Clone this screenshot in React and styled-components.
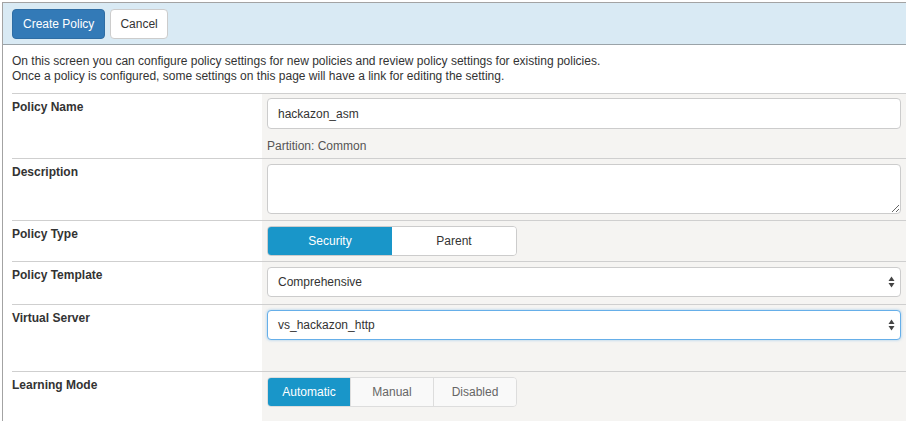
import styled, { createGlobalStyle } from "styled-components";

const GlobalStyle = createGlobalStyle`
  body {
    margin: 0;
    background: #ffffff;
    font-family: "Liberation Sans", Arial, sans-serif;
    font-size: 12px;
    color: #333;
  }
`;

// outer panel with the grey frame on the top and left
const Frame = styled.div`
  margin: 2px 0 0 2px;
  border-top: 1px solid #a3a3a3;
  border-left: 1px solid #a3a3a3;
  min-height: 418px;
  background: #fff;
`;

const Toolbar = styled.div`
  display: flex;
  gap: 5px;
  height: 42px;
  padding: 6px 0 0 9px;
  box-sizing: border-box;
  background: #d9eaf4;
  border-bottom: 1px solid #9aa3a8;
`;

const Button = styled.button`
  height: 30px;
  padding: 0 ${(p) => (p.primary ? 10 : 9)}px;
  border-radius: 4px;
  font-family: inherit;
  font-size: 12px;
  cursor: pointer;
  border: 1px solid ${(p) => (p.primary ? "#2e6da4" : "#ccc")};
  background: ${(p) => (p.primary ? "#337ab7" : "#fff")};
  color: ${(p) => (p.primary ? "#fff" : "#333")};
`;

const Intro = styled.div`
  padding: 9px 0 9px 9px;
  line-height: 15px;
`;

const Form = styled.div`
  margin-left: 9px;
`;

const Row = styled.div`
  display: grid;
  grid-template-columns: 250px 1fr;
  border-top: 1px solid #cfcfcf;
  min-height: ${(p) => p.height}px;
`;

const Label = styled.div`
  font-weight: bold;
  padding-top: 6px;
  line-height: 15px;
`;

const Value = styled.div`
  background: #f5f4f2;
  padding: ${(p) => p.pad || "4px 5px 5px 5px"};
  display: flex;
  flex-direction: column;
  align-items: flex-start;
`;

const TextInput = styled.input`
  box-sizing: border-box;
  width: 100%;
  height: 31px;
  padding: 0 10px;
  border: 1px solid #ccc;
  border-radius: 4px;
  background: #fff;
  font-family: inherit;
  font-size: 12px;
  color: #333;
  outline: none;
`;

const Note = styled.div`
  margin-top: 10px;
  color: #555;
  line-height: 14px;
`;

const TextArea = styled.textarea`
  box-sizing: border-box;
  width: 100%;
  height: 50px;
  border: 1px solid #ccc;
  border-radius: 4px;
  background: #fff;
  font-family: inherit;
  font-size: 12px;
  outline: none;
  display: block;
`;

const Segmented = styled.div`
  display: flex;
  width: 250px;
  height: 30px;
  border-radius: 4px;
  overflow: hidden;
  border: 1px solid ${(p) => (p.muted ? "#ddd" : "#ccc")};
  box-sizing: border-box;
`;

const Segment = styled.div`
  flex: 1;
  display: flex;
  align-items: center;
  justify-content: center;
  font-size: 12px;
  background: ${(p) => (p.active ? "#1996c9" : p.muted ? "#f9f9f9" : "#fff")};
  color: ${(p) => (p.active ? "#fff" : p.muted ? "#666" : "#333")};
  border-left: ${(p) => (p.first ? "none" : p.muted ? "1px solid #ddd" : "none")};
`;

const SelectBox = styled.div`
  box-sizing: border-box;
  width: 100%;
  height: 30px;
  display: flex;
  align-items: center;
  justify-content: space-between;
  padding: 0 5px 0 10px;
  background: #fff;
  border: 1px solid ${(p) => (p.focused ? "#66afe9" : "#ccc")};
  border-radius: 4px;
  box-shadow: ${(p) => (p.focused ? "0 0 3px rgba(102, 175, 233, 0.6)" : "none")};
  color: #333;
`;

function Arrows() {
  return (
    <svg width="7" height="12" viewBox="0 0 7 12">
      <path d="M3.5 0.5 L6.5 5 L0.5 5 Z" fill="#444" />
      <path d="M0.5 7 L6.5 7 L3.5 11.5 Z" fill="#444" />
    </svg>
  );
}

export default function App() {
  return (
    <>
      <GlobalStyle />
      <Frame>
        <Toolbar>
          <Button primary>Create Policy</Button>
          <Button>Cancel</Button>
        </Toolbar>
        <Intro>
          On this screen you can configure policy settings for new policies and review policy settings for existing policies.
          <br />
          Once a policy is configured, some settings on this page will have a link for editing the setting.
        </Intro>
        <Form>
          <Row height={63}>
            <Label>Policy Name</Label>
            <Value>
              <TextInput defaultValue="hackazon_asm" />
              <Note>Partition: Common</Note>
            </Value>
          </Row>
          <Row height={61}>
            <Label>Description</Label>
            <Value pad="5px">
              <TextArea />
            </Value>
          </Row>
          <Row height={40}>
            <Label>Policy Type</Label>
            <Value pad="5px">
              <Segmented>
                <Segment active first>Security</Segment>
                <Segment>Parent</Segment>
              </Segmented>
            </Value>
          </Row>
          <Row height={42}>
            <Label>Policy Template</Label>
            <Value pad="5px 5px 7px 5px">
              <SelectBox>
                Comprehensive
                <Arrows />
              </SelectBox>
            </Value>
          </Row>
          <Row height={66}>
            <Label>Virtual Server</Label>
            <Value pad="5px">
              <SelectBox focused>
                vs_hackazon_http
                <Arrows />
              </SelectBox>
            </Value>
          </Row>
          <Row height={50}>
            <Label>Learning Mode</Label>
            <Value pad="5px">
              <Segmented muted>
                <Segment active first muted>Automatic</Segment>
                <Segment muted>Manual</Segment>
                <Segment muted>Disabled</Segment>
              </Segmented>
            </Value>
          </Row>
        </Form>
      </Frame>
    </>
  );
}
